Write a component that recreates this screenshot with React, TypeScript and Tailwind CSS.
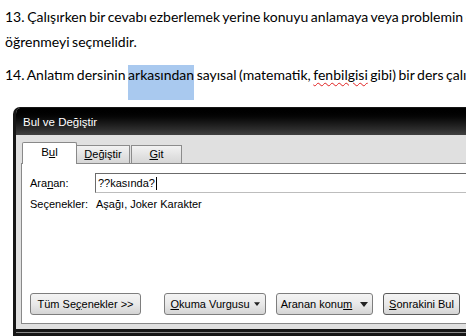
import React from 'react';

// Small dropdown triangle used on the split buttons
const Caret = ({ size = 7 }: { size?: number }) => (
  <svg width={size} height={Math.ceil(size / 2) + 1} viewBox="0 0 8 5" className="inline-block">
    <path d="M0 0h8L4 5z" fill="#222" />
  </svg>
);

const Btn = ({ children, w, strong }: { children: React.ReactNode; w: string; strong?: boolean }) => (
  <div
    className={`h-[22px] ${w} flex items-center justify-center rounded-[3px] border ${
      strong ? 'border-[#5a5a5a]' : 'border-[#7e7e7e]'
    } bg-gradient-to-b from-[#f4f4f4] via-[#e9e9e9] to-[#d4d4d4] text-black`}
  >
    {children}
  </div>
);

export default function App() {
  return (
    <div className="w-[466px] h-[336px] overflow-hidden bg-white">
      {/* Document text behind the dialog */}
      <div className="h-[107px] pl-[5px] pt-[5px] whitespace-nowrap font-['Lato',sans-serif] text-[14px] [word-spacing:-1px] text-black">
        <p className="leading-[24.5px]">13. Çalışırken bir cevabı ezberlemek yerine konuyu anlamaya veya problemin çözümünü</p>
        <p className="leading-[24.5px]">öğrenmeyi seçmelidir.</p>
        <p className="mt-[9px] leading-[24.5px]">
          14. Anlatım dersinin{' '}
          <span className="inline-block bg-[#a9c9ef] leading-[15px] pt-[2px] pb-[18px]">arkasından</span> sayısal
          (matematik, <span className="underline decoration-wavy decoration-[#e02020] decoration-1 underline-offset-2">fenbilgisi</span>{' '}
          gibi) bir ders çalışılmalıdır.
        </p>
      </div>

      {/* Find & Replace dialog */}
      <div className="ml-[13px] w-[470px] h-[229px] flex flex-col rounded-tl-[7px] overflow-hidden border-l-[3px] border-t border-[#161616] bg-[#e0e0e0] font-['Liberation_Sans',sans-serif] text-[11px]">
        <div className="h-[27px] shrink-0 flex items-center pl-[7px] pt-[3px] bg-gradient-to-b from-[#000000] via-[#141414] to-[#404040] text-white text-[11.5px]">
          Bul ve Değiştir
        </div>

        <div className="flex-1 flex flex-col pl-[5px]">
          {/* Tabs */}
          <div className="h-[28px] flex items-end pl-[1px]">
            <div className="relative z-10 -mb-px w-[55px] h-[22px] flex items-center justify-center pb-[1px] bg-white border border-b-0 border-[#898989] rounded-t-[2px] text-[11.5px]">
              <span>
                B<span className="underline">u</span>l
              </span>
            </div>
            <div className="w-[53px] h-[18px] flex items-center justify-center bg-gradient-to-b from-[#f2f2f2] to-[#d6d6d6] border border-l-0 border-b-0 border-[#8c8c8c]">
              <span>
                <span className="underline">D</span>eğiştir
              </span>
            </div>
            <div className="ml-[1px] w-[51px] h-[18px] flex items-center justify-center bg-gradient-to-b from-[#f2f2f2] to-[#d6d6d6] border border-b-0 border-[#8c8c8c]">
              <span>
                <span className="underline">G</span>it
              </span>
            </div>
          </div>

          {/* Tab panel */}
          <div className="h-[161px] flex flex-col bg-white border-t border-l border-b border-[#898989] pl-[8px]">
            <div className="mt-[9px] flex items-center">
              <span className="w-[65px]">
                Ara<span className="underline">n</span>an:
              </span>
              <div className="flex-1 h-[20px] flex items-center pl-[2px] border-t border-l border-[#6b6b6b] border-b border-b-[#bdbdbd]">
                <span>??kasında?</span>
                <span className="inline-block ml-px w-px h-[13px] bg-black" />
              </div>
            </div>
            <div className="mt-[4px] flex items-center leading-[15px]">
              <span className="w-[66px]">Seçenekler:</span>
              <span>Aşağı, Joker Karakter</span>
            </div>

            <div className="mt-auto mb-[8px] flex items-center">
              <Btn w="w-[111px]">
                <span>
                  Tüm Se<span className="underline">ç</span>enekler &gt;&gt;
                </span>
              </Btn>
              <div className="ml-[23px]">
                <Btn w="w-[102px]">
                  <span className="mr-[4px]">
                    <span className="underline">O</span>kuma Vurgusu
                  </span>
                  <Caret size={6} />
                </Btn>
              </div>
              <div className="ml-[10px]">
                <Btn w="w-[97px]">
                  <span className="mr-[8px]">
                    Aranan konu<span className="underline">m</span>
                  </span>
                  <Caret size={8} />
                </Btn>
              </div>
              <div className="ml-[10px]">
                <Btn w="w-[77px]" strong>
                  <span>
                    <span className="underline">S</span>onrakini Bul
                  </span>
                </Btn>
              </div>
            </div>
          </div>
          <div className="h-[5px]" />
        </div>

        {/* Bottom frame */}
        <div className="h-[7px] shrink-0 border-t-[3px] border-b-[3px] border-[#161616] bg-[#8a8a8a]" />
      </div>
    </div>
  );
}
